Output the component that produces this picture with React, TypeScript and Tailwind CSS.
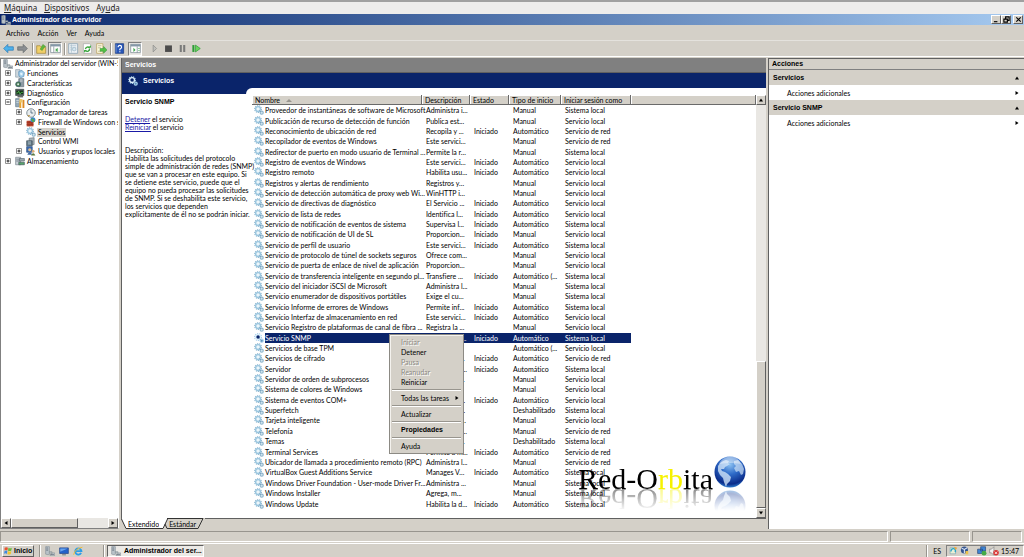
import React from 'react';
import clsx from 'clsx';

type Row = [name: string, desc: string, estado: string, tipo: string, sesion: string];

const M = 'Manual';
const A = 'Automático';
const I = 'Iniciado';
const SL = 'Sistema local';
const VL = 'Servicio local';
const RED = 'Servicio de red';

const services: Row[] = [
  ['Proveedor de instantáneas de software de Microsoft', 'Administra i...', '', M, SL],
  ['Publicación de recurso de detección de función', 'Publica est...', '', M, VL],
  ['Reconocimiento de ubicación de red', 'Recopila y ...', I, A, RED],
  ['Recopilador de eventos de Windows', 'Este servici...', '', M, RED],
  ['Redirector de puerto en modo usuario de Terminal ...', 'Permite la r...', '', M, SL],
  ['Registro de eventos de Windows', 'Este servici...', I, A, VL],
  ['Registro remoto', 'Habilita usu...', I, A, VL],
  ['Registros y alertas de rendimiento', 'Registros y...', '', M, VL],
  ['Servicio de detección automática de proxy web Wi...', 'WinHTTP i...', '', M, VL],
  ['Servicio de directivas de diagnóstico', 'El Servicio ...', I, A, VL],
  ['Servicio de lista de redes', 'Identifica l...', I, A, VL],
  ['Servicio de notificación de eventos de sistema', 'Supervisa l...', I, A, SL],
  ['Servicio de notificación de UI de SL', 'Proporcion...', I, M, VL],
  ['Servicio de perfil de usuario', 'Este servici...', I, A, SL],
  ['Servicio de protocolo de túnel de sockets seguros', 'Ofrece com...', '', M, VL],
  ['Servicio de puerta de enlace de nivel de aplicación', 'Proporcion...', '', M, VL],
  ['Servicio de transferencia inteligente en segundo pl...', 'Transfiere ...', I, 'Automático (...', SL],
  ['Servicio del iniciador iSCSI de Microsoft', 'Administra l...', '', M, SL],
  ['Servicio enumerador de dispositivos portátiles', 'Exige el cu...', '', M, SL],
  ['Servicio Informe de errores de Windows', 'Permite inf...', I, A, SL],
  ['Servicio Interfaz de almacenamiento en red', 'Este servici...', I, A, VL],
  ['Servicio Registro de plataformas de canal de fibra ...', 'Registra la ...', '', M, VL],
  ['Servicio SNMP', 'Habilita las ...', I, A, SL],
  ['Servicios de base TPM', 'Permite el ...', '', 'Automático (...', VL],
  ['Servicios de cifrado', 'Proporcion...', I, A, RED],
  ['Servidor', 'Ofrece com...', I, A, SL],
  ['Servidor de orden de subprocesos', 'Proporcion...', '', M, VL],
  ['Sistema de colores de Windows', 'El servicio ...', '', M, VL],
  ['Sistema de eventos COM+', 'Admite el s...', I, A, VL],
  ['Superfetch', 'Mantiene y...', '', 'Deshabilitado', SL],
  ['Tarjeta inteligente', 'Administra ...', '', M, VL],
  ['Telefonía', 'Ofrece com...', '', M, RED],
  ['Temas', 'Proporcion...', '', 'Deshabilitado', SL],
  ['Terminal Services', 'Permite a m...', I, A, RED],
  ['Ubicador de llamada a procedimiento remoto (RPC)', 'Administra l...', '', M, RED],
  ['VirtualBox Guest Additions Service', 'Manages V...', I, A, SL],
  ['Windows Driver Foundation - User-mode Driver Fr...', 'Administra ...', '', M, SL],
  ['Windows Installer', 'Agrega, m...', '', M, SL],
  ['Windows Update', 'Habilita la d...', I, A, SL],
];

const raised = 'border border-t-white border-l-white border-r-[#606060] border-b-[#606060] bg-[#d4d0c8]';
const bold = "font-['Liberation_Sans',sans-serif] font-bold text-[7px]";

const Gears = ({ dark = false, className = 'size-[10px]' }: { dark?: boolean; className?: string }) => (
  <svg viewBox="0 0 16 16" className={clsx('shrink-0', className)}>
    <circle cx="6.5" cy="6.5" r="5.4" fill="none" stroke={dark ? '#9cc8e8' : '#8fb6cf'} strokeWidth="1.8" strokeDasharray="2 1.3" />
    <circle cx="6.5" cy="6.5" r="3.9" fill={dark ? '#0a246a' : '#eef7fb'} stroke={dark ? '#dceffa' : '#9ac6df'} strokeWidth="2.2" />
    <circle cx="12.3" cy="12.3" r="2.5" fill={dark ? '#5d91bd' : '#cfe4ee'} stroke={dark ? '#a9d0ea' : '#8fb4cc'} strokeWidth="1.8" />
    <path d="M8.6 8.8l1.6 1.8" stroke="#5a86a8" strokeWidth="1.2" />
  </svg>
);

const ServerIcon = ({ className = 'size-[10px]' }: { className?: string }) => (
  <svg viewBox="0 0 16 16" className={clsx('shrink-0', className)}>
    <path d="M1 1l4-1 2 1v12l-2 1-4-1z" fill="#b9c2c8" stroke="#76838c" strokeWidth=".8" />
    <path d="M2 3h3M2 5h3M2 7h3" stroke="#5b6872" strokeWidth=".9" />
    <path d="M7 9h4v2H7zM11 11h4.500v4.500H8V13h3z" fill="#c9cfd3" stroke="#74808a" strokeWidth=".8" />
    <path d="M9 13.500h5.500" stroke="#55626c" />
  </svg>
);

const TreeIcon = ({ kind }: { kind: string }) => {
  if (kind === 'server') return <ServerIcon />;
  if (kind === 'gears') return <Gears />;
  return (
    <svg viewBox="0 0 16 16" className="size-[10px] shrink-0">
      {kind === 'roles' && (
        <>
          <path d="M1 1h7v12H1z" fill="#cfd8de" stroke="#8494a0" />
          <path d="M6 4l5-2 4 4-1 6-5 2-3-4z" fill="#9fcbe8" stroke="#4e88b4" />
          <path d="M8 6h4v4H9z" fill="#e6f4fc" />
        </>
      )}
      {kind === 'features' && (
        <>
          <path d="M6 1h8v13H6z" fill="#8d9aa3" stroke="#5e6a73" />
          <path d="M8 3h4M8 5h4" stroke="#dfe6ea" />
          <circle cx="5" cy="10" r="4" fill="#4d8152" stroke="#33506a" />
          <circle cx="5" cy="10" r="1.500" fill="#e2edf4" />
        </>
      )}
      {kind === 'diag' && (
        <>
          <path d="M1 2h13v10H1z" fill="#5a6468" stroke="#2f3639" />
          <path d="M2 4h11v6H2z" fill="#16321a" />
          <path d="M2 8h2l2-3 2 5 2-3h3" fill="none" stroke="#5fe05f" />
          <path d="M4 13h9v2H4z" fill="#555" />
        </>
      )}
      {kind === 'config' && (
        <>
          <path d="M1 1h6v13H1z" fill="#94a9b8" stroke="#5f7688" />
          <path d="M2 4h4M2 7h4" stroke="#dfe8ee" />
          <path d="M7 6h3v10H7z" fill="#e8a431" />
          <path d="M12 3h3v13h-3z" fill="#dc8a24" />
          <path d="M7 1l5 1v5H7z" fill="#ecc66a" />
        </>
      )}
      {kind === 'clock' && (
        <>
          <circle cx="8" cy="8" r="6.800" fill="#e8edef" stroke="#7c8a92" strokeWidth="1.500" />
          <path d="M8 3.500V8h3.500" fill="none" stroke="#3c5870" strokeWidth="1.200" />
          <path d="M3 13l3-1" stroke="#bc8d30" strokeWidth="2" />
        </>
      )}
      {kind === 'firewall' && (
        <>
          <path d="M1 6h11v9H1z" fill="#b6432d" />
          <path d="M1 9h11M1 12h11M5 6v3M9 9v3M5 12v3" stroke="#8c2c1c" strokeWidth=".8" />
          <circle cx="11" cy="4.500" r="4" fill="#3b86c8" />
          <path d="M8 4q3-3 4 0t3 1q-1 3-4 3z" fill="#55ab4d" />
        </>
      )}
      {kind === 'wmi' && (
        <>
          <path d="M5 2l8-1v11l-8 1z" fill="#aab4ba" stroke="#657179" />
          <path d="M1 6h9v8H1z" fill="#5f7684" stroke="#3b4b56" />
          <path d="M3 8h5M3 11h5" stroke="#dce8ee" />
        </>
      )}
      {kind === 'users' && (
        <>
          <path d="M1 1h9v9H1z" fill="#3c6cb0" stroke="#27497c" />
          <circle cx="6" cy="6" r="2.500" fill="#e5bf8c" />
          <path d="M2 14q4-9 8 0z" fill="#426ba4" />
          <circle cx="11.500" cy="8.500" r="2.200" fill="#d9ac78" />
          <path d="M8 15q3.500-7 7 0z" fill="#5b7a3e" />
        </>
      )}
      {kind === 'storage' && (
        <>
          <path d="M1 2h8v12H1z" fill="#cad2d7" stroke="#6d7a83" />
          <path d="M2 5h6M2 8h6" stroke="#4b5963" />
          <path d="M7 4h8v4H7z" fill="#9ba7ae" stroke="#56636b" />
          <path d="M6 10h9v4H6z" fill="#57a66c" stroke="#44545c" />
        </>
      )}
    </svg>
  );
};

const tree = [
  { label: 'Administrador del servidor (WIN-5V', icon: 'server', level: 0, box: '' },
  { label: 'Funciones', icon: 'roles', level: 1, box: '+' },
  { label: 'Características', icon: 'features', level: 1, box: '+' },
  { label: 'Diagnóstico', icon: 'diag', level: 1, box: '+' },
  { label: 'Configuración', icon: 'config', level: 1, box: '-' },
  { label: 'Programador de tareas', icon: 'clock', level: 2, box: '+' },
  { label: 'Firewall de Windows con se', icon: 'firewall', level: 2, box: '+' },
  { label: 'Servicios', icon: 'gears', level: 2, box: '', selected: true },
  { label: 'Control WMI', icon: 'wmi', level: 2, box: '' },
  { label: 'Usuarios y grupos locales', icon: 'users', level: 2, box: '+' },
  { label: 'Almacenamiento', icon: 'storage', level: 1, box: '+' },
];

const Expander = ({ box }: { box: string }) => (
  <svg viewBox="0 0 7 7" className="size-[7px] shrink-0">
    {box && (
      <>
        <path d="M.5.5h5v5h-5z" fill="#fff" stroke="#909090" />
        <path d={box === '+' ? 'M1.500 3h3M3 1.500v3' : 'M1.500 3h3'} stroke="#222" />
      </>
    )}
  </svg>
);

const Arrow = ({ d }: { d: 'up' | 'down' | 'left' | 'right' }) => (
  <svg viewBox="0 0 6 6" className="size-[6px] shrink-0">
    <path
      d={{ up: 'M1 4.500h4L3 1.500z', down: 'M1 1.500h4L3 4.500z', left: 'M4.500 1v4L1.500 3z', right: 'M1.500 1v4L4.500 3z' }[d]}
      fill="#000"
    />
  </svg>
);

const ScrollButton = ({ d }: { d: 'up' | 'down' | 'left' | 'right' }) => (
  <button aria-label={d} className={clsx('flex size-[10px] shrink-0 items-center justify-center', raised)}>
    <Arrow d={d} />
  </button>
);

const Sep = () => <div className="h-3 w-[2px] shrink-0 border-l border-[#98958e] bg-white" />;

const ToolButton = ({ label, pressed, children }: { label: string; pressed?: boolean; children: React.ReactNode }) => (
  <button
    aria-label={label}
    className={clsx(
      'flex h-[14px] w-[14px] shrink-0 items-center justify-center',
      pressed && 'border border-t-[#808080] border-l-[#808080] border-r-white border-b-white bg-[#ebe9e5]'
    )}
  >
    <svg viewBox="0 0 16 16" className="size-[11px] shrink-0">
      {children}
    </svg>
  </button>
);

const Toolbar = () => (
  <div className="flex h-[15px] items-center px-px">
    <ToolButton label="Atrás">
      <path d="M1 8l6-6v3.500h8v5H7V14z" fill="#4eb2ec" stroke="#2878b4" />
    </ToolButton>
    <ToolButton label="Adelante">
      <path d="M15 8L9 2v3.500H1v5h8V14z" fill="#8b8f92" stroke="#62676a" />
    </ToolButton>
    <div className="w-[3px]" />
    <Sep />
    <ToolButton label="Subir">
      <path d="M1 4h5l2 2h6v9H1z" fill="#f0cf68" stroke="#a58434" />
      <path d="M6 9l4-7 4 3-2 1-3 5z" fill="#61b93c" stroke="#3e872a" strokeWidth=".6" />
    </ToolButton>
    <ToolButton label="Mostrar árbol" pressed>
      <path d="M1 2h14v12H1z" fill="#fff" stroke="#71828e" />
      <path d="M1 2h14v3H1z" fill="#8598a8" />
      <path d="M5.500 5v9" stroke="#71828e" />
      <path d="M7 8h5v5H7z" fill="#d7e7d4" />
      <path d="M11 7v6L8 10z" fill="#37a246" />
    </ToolButton>
    <div className="w-[2px]" />
    <Sep />
    <ToolButton label="Propiedades">
      <path d="M1 1h13v14H1z" fill="#eef3f6" stroke="#7f9bb0" />
      <path d="M3 4h9M3 7h9M3 10h9M5 2v12" stroke="#a5bccb" />
      <circle cx="9" cy="9" r="2.500" fill="#d7e8f2" stroke="#9db7c8" />
    </ToolButton>
    <ToolButton label="Actualizar">
      <path d="M2 1h9l3 3v11H2z" fill="#fff" stroke="#a8a8a8" />
      <path d="M5 9a3.500 3.500 0 016-2M11 8a3.500 3.500 0 01-6 3" fill="none" stroke="#3ba63e" strokeWidth="2" />
      <path d="M9 7h4V3zM7 10H3v4z" fill="#3ba63e" />
    </ToolButton>
    <ToolButton label="Exportar lista">
      <path d="M1 1h9v14H1z" fill="#fffbe0" stroke="#b49c58" />
      <path d="M3 4h5M3 7h4M3 12h5" stroke="#a5a07a" />
      <path d="M6 8h5V5l5 5-5 5v-3H6z" fill="#51c245" stroke="#2f8b31" strokeWidth=".7" />
    </ToolButton>
    <div className="w-[2px]" />
    <Sep />
    <ToolButton label="Ayuda">
      <path d="M2 1h12v14H2z" fill="#2856b8" stroke="#14367e" />
      <path d="M3 2v12" stroke="#86a8e2" />
      <path d="M6 6q0-2.500 2.500-2.500T11 6q0 1.500-2.500 3v1.500M8.500 12v1.500" fill="none" stroke="#fff" strokeWidth="1.700" />
    </ToolButton>
    <div className="w-[2px]" />
    <ToolButton label="Panel de acciones" pressed>
      <path d="M1 2h14v12H1z" fill="#fff" stroke="#71828e" />
      <path d="M1 2h14v3H1z" fill="#8598a8" />
      <path d="M10.500 5v9" stroke="#71828e" />
      <path d="M5 7v6l3-3z" fill="#37a246" />
      <path d="M12 8h2M12 11h2" stroke="#37a246" />
    </ToolButton>
    <div className="w-[5px]" />
    <ToolButton label="Iniciar">
      <path d="M6 3v10l5-5z" fill="#c0c0bc" stroke="#8a8a88" />
    </ToolButton>
    <ToolButton label="Detener">
      <path d="M3 3.500h10v9.500H3z" fill="#4c4c4c" />
    </ToolButton>
    <ToolButton label="Pausar">
      <path d="M4 3h3v10H4zM9 3h3v10H9z" fill="#7a7a7a" />
    </ToolButton>
    <ToolButton label="Reiniciar">
      <path d="M2 3h3v10H2z" fill="#2c9c35" />
      <path d="M6.500 3v10l7-5z" fill="#69d45c" stroke="#2c9c35" />
    </ToolButton>
  </div>
);

const menuItems = [
  { label: 'Iniciar', disabled: true },
  { label: 'Detener' },
  { label: 'Pausa', disabled: true },
  { label: 'Reanudar', disabled: true },
  { label: 'Reiniciar' },
  null,
  { label: 'Todas las tareas', sub: true },
  null,
  { label: 'Actualizar' },
  null,
  { label: 'Propiedades', strong: true },
  null,
  { label: 'Ayuda' },
];

const ContextMenu = () => (
  <div className="absolute top-[239px] left-[137px] flex w-[75px] flex-col border border-[#8c8a84] bg-[#d4d0c8] py-[2px] shadow-[inset_1px_1px_0_#f4f2ee]">
    {menuItems.map((item, i) =>
      item ? (
        <button
          key={i}
          disabled={item.disabled}
          className={clsx(
            'flex h-[10px] items-center justify-between pr-[3px] pl-[11px] text-left whitespace-nowrap',
            item.disabled && 'text-[#8c8a84] [text-shadow:1px_1px_0_#fff]',
            item.strong && bold
          )}
        >
          {item.label}
          {item.sub && <Arrow d="right" />}
        </button>
      ) : (
        <div key={i} className="mx-[2px] my-[2px] h-[2px] border-t border-[#98958e] bg-white" />
      )
    )}
  </div>
);

const Watermark = () => (
  <div className="pointer-events-none absolute right-5 bottom-[29px] flex items-end gap-px [-webkit-box-reflect:below_0px_linear-gradient(transparent_35%,rgba(0,0,0,0.45))]">
    <span className="font-['Liberation_Serif',serif] text-[30px] leading-[20px] text-black">
      Red-O<span className="text-[#f6f200]">rb</span>ita
    </span>
    <svg viewBox="0 0 32 34" className="h-[34px] w-[32px]">
      <defs>
        <radialGradient id="globe" cx=".5" cy=".25" r=".8">
          <stop offset="0" stopColor="#8fc3f2" />
          <stop offset=".4" stopColor="#2f6cc9" />
          <stop offset=".8" stopColor="#0b2c8a" />
          <stop offset="1" stopColor="#3fa3ee" />
        </radialGradient>
      </defs>
      <circle cx="16" cy="17" r="15.500" fill="url(#globe)" />
      <path d="M4 11q3-5 8-6l3 1-1 2 2 1-3 2-2 1-1 2-3 0 1 2 3 1 3 2 3 3-1 4-3 3-1 3-2-5-1-4-3-3-2-4z" fill="#cfe3f7" opacity=".8" />
      <path d="M20 6l4-1 4 4 2 5-1 5-2 1-2-4-3 1-2-4 2-2-2-2z" fill="#cfe3f7" opacity=".7" />
      <path d="M5 9q3-7 11-7.500T27 9q-10-2-22 0z" fill="#fff" opacity=".4" />
    </svg>
  </div>
);

const columns = ['Nombre', 'Descripción', 'Estado', 'Tipo de inicio', 'Iniciar sesión como', ''];

const ServiceTable = () => (
  <div className="relative flex min-w-0 flex-1">
    <div className="min-w-0 flex-1 pb-[9px]">
      <table className="h-full w-full table-fixed border-collapse text-left">
        <colgroup>
          <col className="w-[170px]" />
          <col className="w-[48px]" />
          <col className="w-[39px]" />
          <col className="w-[52px]" />
          <col className="w-[70px]" />
          <col />
        </colgroup>
        <thead>
          <tr>
            {columns.map((c, i) => (
              <th key={i} className="bg-[#d4d0c8] p-0 font-normal shadow-[inset_-1px_-1px_0_#6a6a6a,inset_1px_1px_0_#fff]">
                <div className="flex items-center gap-[6px] pl-[3px] leading-[10px] whitespace-nowrap">
                  {c}
                  {i === 0 && (
                    <svg viewBox="0 0 6 4" className="h-1 w-[6px]">
                      <path d="M0 4h6L3 1z" fill="#99968f" />
                    </svg>
                  )}
                </div>
              </th>
            ))}
          </tr>
        </thead>
        <tbody>
          {services.map(([name, ...rest]) => {
            const on = name === 'Servicio SNMP';
            return (
              <tr key={name} className={clsx(on && 'text-white')}>
                <td className="p-0">
                  <div className="flex items-center gap-px pl-[2px]">
                    <Gears dark={on} />
                    <span className={clsx('min-w-0 flex-1 leading-[10px] whitespace-nowrap', on && 'bg-[#0a246a]')}>{name}</span>
                  </div>
                </td>
                {rest.map((v, i) => (
                  <td key={i} className="p-0">
                    <div className={clsx('h-[10px] pl-1 leading-[10px] whitespace-nowrap', on && 'bg-[#0a246a]')}>{v}</div>
                  </td>
                ))}
                <td className="p-0" />
              </tr>
            );
          })}
        </tbody>
      </table>
    </div>
    <div className="flex w-[10px] flex-col bg-[#e9e7e3]">
      <ScrollButton d="up" />
      <div className="flex-[257]" />
      <div className={clsx('flex-[146]', raised)} />
      <ScrollButton d="down" />
    </div>
    <Watermark />
    <ContextMenu />
  </div>
);

const Tree = () => (
  <nav className="flex w-[119px] shrink-0 flex-col overflow-hidden border border-[#808080] border-r-white bg-white">
    <ul className="flex h-[107px] flex-col">
      {tree.map((n) => (
        <li
          key={n.label}
          className={clsx('flex min-h-0 flex-1 items-center whitespace-nowrap', n.level === 0 && 'pl-[2px]', n.level === 1 && 'pl-1', n.level === 2 && 'pl-[15px]')}
        >
          {n.level > 0 && <Expander box={n.box} />}
          <span className={clsx(n.level > 0 && 'pl-[3px]')}>
            <TreeIcon kind={n.icon} />
          </span>
          <a href="#" className={clsx('ml-px px-px leading-[9px]', n.selected && 'bg-[#d4d0c8]')}>
            {n.label}
          </a>
        </li>
      ))}
    </ul>
    <div className="mt-auto flex h-[10px] bg-[#e9e7e3]">
      <ScrollButton d="left" />
      <div className={clsx('flex-[67]', raised)} />
      <div className="flex-[31]" />
      <ScrollButton d="right" />
    </div>
  </nav>
);

const ActionGroup = ({ title }: { title: string }) => (
  <section>
    <h3 className={clsx('flex h-[15px] items-center justify-between bg-[#d4d0c8] pr-1 pl-1', bold)}>
      {title}
      <Arrow d="up" />
    </h3>
    <button className="flex h-[15px] w-full items-center justify-between pr-1 pl-[18px]">
      Acciones adicionales
      <Arrow d="right" />
    </button>
  </section>
);

const Tabs = () => (
  <div className="flex h-[11px] items-start bg-[#d4d0c8] leading-[10px]">
    <div className="flex">
      <svg viewBox="0 0 7 11" className="h-[11px] w-[7px]">
        <path d="M0 0h7v11H5z" fill="#fff" />
        <path d="M0 0l5 10.500h2" fill="none" stroke="#333" />
      </svg>
      <button className="h-[11px] border-b border-[#333] bg-white pt-px">Extendido</button>
      <svg viewBox="0 0 10 11" className="h-[11px] w-[10px]">
        <path d="M0 0h9L4 10.500H0z" fill="#fff" />
        <path d="M9 0L4 10.500H0M6 6l2 4.500h2M8 .5h2" fill="none" stroke="#333" />
      </svg>
      <button className="h-[11px] border-y border-[#333]">Estándar</button>
      <svg viewBox="0 0 9 11" className="h-[11px] w-[9px]">
        <path d="M0 .5h7L2 10.500H0" fill="none" stroke="#333" />
      </svg>
    </div>
    <div className="h-px flex-1 bg-[#606060]" />
  </div>
);

const TitleButton = ({ label, children }: { label: string; children: React.ReactNode }) => (
  <button aria-label={label} className={clsx('flex h-[9px] w-[10px] items-center justify-center', raised)}>
    <svg viewBox="0 0 8 8" className="size-[7px]" fill="none" stroke="#000" strokeWidth="1.300">
      {children}
    </svg>
  </button>
);

const Taskbar = () => (
  <footer className="flex h-[14px] items-center border-t border-white pl-[2px]">
    <button className={clsx('flex h-3 w-8 items-center gap-px pl-px', bold, raised)}>
      <svg viewBox="0 0 16 16" className="size-[9px]">
        <path d="M1 3q3-2 6 0l-1 5q-3-2-5 0z" fill="#e8542e" />
        <path d="M8 3q3 2 6 0l-1 5q-3 2-6 0z" fill="#6fbe3c" />
        <path d="M1 9q3-2 5 0l-1 5q-3-2-5 0z" fill="#3f8ae0" />
        <path d="M7 9q3 2 6 0l-1 5q-3 2-6 0z" fill="#f3c32c" />
      </svg>
      Inicio
    </button>
    <div className="w-[5px]" />
    <Sep />
    <div className="flex w-[62px] items-center gap-1 pl-1">
      <ServerIcon />
      <svg viewBox="0 0 16 16" className="size-[10px]">
        <path d="M1 3h14v9H1z" fill="#2461c8" stroke="#1c3d80" />
        <path d="M2 4h12L2 9z" fill="#69a4ee" />
        <path d="M5 13h6v2H5z" fill="#888" />
      </svg>
      <svg viewBox="0 0 16 16" className="size-[10px]">
        <path d="M13 11a5 5 0 11.500-3H4" fill="none" stroke="#2c9de8" strokeWidth="2.800" />
        <path d="M1 14Q3 4 15 2" fill="none" stroke="#f0bd32" strokeWidth="1.500" />
      </svg>
    </div>
    <Sep />
    <div className="w-[2px]" />
    <button className={clsx('flex h-3 w-[97px] items-center gap-[3px] border border-t-[#606060] border-l-[#606060] border-r-white border-b-white bg-[#eceae6] pl-[3px] whitespace-nowrap', bold)}>
      <ServerIcon />
      Administrador del ser...
    </button>
    <div className="ml-auto flex items-center gap-[5px]">
      <Sep />
      <span>ES</span>
      <div className="flex h-3 w-[78px] items-center gap-[2px] border border-t-[#808080] border-l-[#808080] border-r-white border-b-white pl-[2px]">
        <svg viewBox="0 0 16 16" className="size-[9px]">
          <path d="M2 3h10v11H2z" fill="#e9f0d4" stroke="#6a9ab0" />
          <path d="M4 10a4 4 0 117 1" fill="none" stroke="#28a4c8" strokeWidth="2.500" />
          <path d="M9 1l6 2-3 4z" fill="#f2a630" />
        </svg>
        <svg viewBox="0 0 16 16" className="size-[9px]">
          <circle cx="8" cy="7" r="6.500" fill="#35558f" />
          <path d="M3 4l5 2 5-3M8 6v7" stroke="#dbe6f8" strokeWidth="2" fill="none" />
          <path d="M10 9h5v6h-5z" fill="#eec34c" />
        </svg>
        <div className="w-[5px]" />
        <svg viewBox="0 0 16 16" className="size-[10px]">
          <path d="M1 5h8v7H1zM6 1h8v7H6z" fill="#3f86d6" stroke="#1f3f73" />
          <circle cx="11.500" cy="11.500" r="4" fill="#45aa48" />
        </svg>
        <svg viewBox="0 0 16 16" className="size-[10px]">
          <path d="M1 5h3l4-4v14l-4-4H1z" fill="#f2f2f2" stroke="#777" />
          <circle cx="11.500" cy="11" r="4.500" fill="#d83434" />
          <path d="M9.500 9l4 4m0-4l-4 4" stroke="#fff" strokeWidth="1.300" />
        </svg>
        <span className="ml-auto pr-1">15:47</span>
      </div>
    </div>
  </footer>
);

export default function App() {
  return (
    <div className="flex min-h-screen flex-col bg-[#d4d0c8] font-[Lato,'Liberation_Sans',sans-serif] text-[7px] leading-[10px] text-black [font-variant-ligatures:none]">
      <div className="flex h-[14px] items-center gap-[7px] border-t-2 border-[#a0a0a0] bg-[#edeceb] pl-1 font-['Noto_Sans',sans-serif] text-[8px] text-[#222]">
        <button><u>M</u>áquina</button>
        <button><u>D</u>ispositivos</button>
        <button>Ay<u>u</u>da</button>
      </div>

      <header className="flex h-[11px] items-center gap-px bg-linear-to-r from-[#0a246a] to-[#a6caf0] px-px text-white">
        <ServerIcon />
        <h1 className={bold}>Administrador del servidor</h1>
        <div className="ml-auto flex">
          <TitleButton label="Minimizar"><path d="M1 6.500h4" /></TitleButton>
          <TitleButton label="Restaurar"><path d="M3 3V1h4v4H5M1 3.500h4V7H1z" /></TitleButton>
          <div className="w-[2px]" />
          <TitleButton label="Cerrar"><path d="M1.500 1.500l5 5m0-5l-5 5" /></TitleButton>
        </div>
      </header>

      <div className="flex h-4 items-center gap-2 border-b border-[#e4e2dd] pl-[6px]">
        <button>Archivo</button>
        <button>Acción</button>
        <button>Ver</button>
        <button>Ayuda</button>
      </div>
      <Toolbar />

      <main className="flex flex-1 gap-[2px] border-t border-white pt-px">
        <Tree />

        <div className="flex min-w-0 flex-1 flex-col">
          <div className="flex flex-1 flex-col border-l border-[#606060] bg-white">
            <h2 className={clsx('flex h-[14px] items-center bg-[#808080] pl-[3px] text-white', bold)}>Servicios</h2>
            <div className="flex flex-1 flex-col border-t border-[#606060] bg-[#0a246a]">
              <div className="flex h-[15px] items-center gap-[5px] pl-[6px] text-white">
                <Gears dark />
                <h2 className={bold}>Servicios</h2>
              </div>
              <div className="flex flex-1">
                <section className="z-10 mt-[6px] w-[124px] shrink-0 bg-white pt-1 pl-[3px] leading-[8px]">
                  <h3 className={clsx(bold, 'mb-[9px]')}>Servicio SNMP</h3>
                  <p><a href="#" className="text-[#1a1aa6] underline">Detener</a> el servicio</p>
                  <p><a href="#" className="text-[#1a1aa6] underline">Reiniciar</a> el servicio</p>
                  <p className="mt-[15px]">Descripción:</p>
                  <p className="whitespace-nowrap">
                    Habilita las solicitudes del protocolo<br />
                    simple de administración de redes (SNMP)<br />
                    que se van a procesar en este equipo. Si<br />
                    se detiene este servicio, puede que el<br />
                    equipo no pueda procesar las solicitudes<br />
                    de SNMP. Si se deshabilita este servicio,<br />
                    los servicios que dependen<br />
                    explícitamente de él no se podrán iniciar.
                  </p>
                </section>
                <div className="flex flex-1 rounded-tl-[6px] bg-white pt-[7px] pl-[6px]">
                  <ServiceTable />
                </div>
              </div>
            </div>
          </div>
          <Tabs />
        </div>

        <aside className="w-[256px] shrink-0 border-t border-l border-[#606060] bg-white">
          <h2 className={clsx('flex h-[11px] items-center border-b border-[#808080] bg-[#d4d0c8] pl-[3px]', bold)}>Acciones</h2>
          <ActionGroup title="Servicios" />
          <ActionGroup title="Servicio SNMP" />
        </aside>
      </main>

      <div className="mt-[2px] flex h-3 gap-[2px] pr-[2px] pb-px">
        <div className="flex-1 border border-[#98958e] border-r-white border-b-white" />
        <div className="w-20 border border-[#98958e] border-r-white border-b-white" />
        <div className="w-[50px] border border-[#98958e] border-r-white border-b-white" />
      </div>
      <Taskbar />
    </div>
  );
}
